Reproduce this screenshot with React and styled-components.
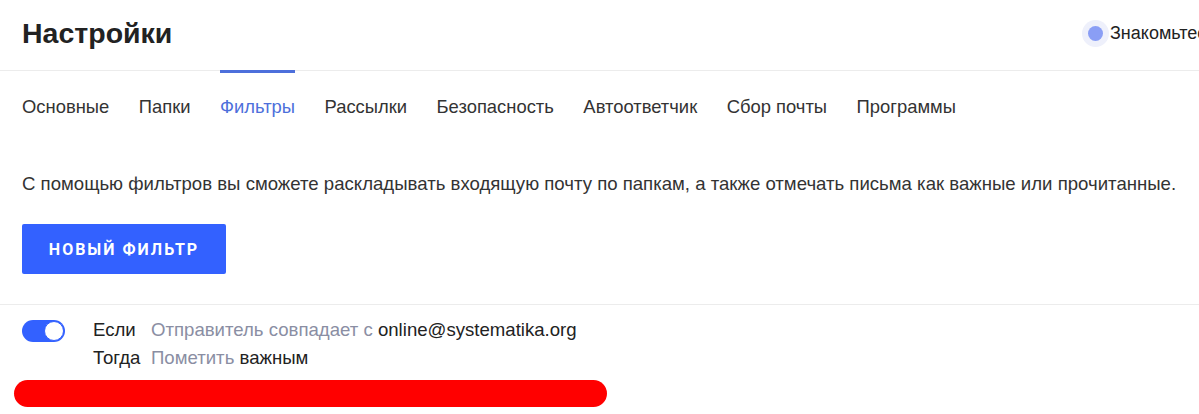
import React from "react";
import styled, { createGlobalStyle } from "styled-components";

const Global = createGlobalStyle`
  html, body { margin: 0; padding: 0; background: #fff; }
  body { font-family: "Liberation Sans", Arial, sans-serif; color: #333; overflow: hidden; }
`;

const Page = styled.div`
  width: 1199px;
  height: 414px;
  overflow: hidden;
  background: #fff;
`;

const Header = styled.header`
  height: 71px;
  display: flex;
  align-items: center;
  padding-left: 22px;
  border-bottom: 1px solid #ececec;
  box-sizing: border-box;
  overflow: hidden;
`;

const Title = styled.h1`
  margin: 0;
  font-size: 28.5px;
  font-weight: 700;
  color: #222;
  padding-bottom: 4px;
`;

const Intro = styled.div`
  margin-left: auto;
  width: 117px;
  flex: none;
  overflow: hidden;
  display: flex;
  align-items: center;
  gap: 1px;
  white-space: nowrap;
  padding-bottom: 4px;
  font-size: 18px;
  color: #222;
`;

const Halo = styled.span`
  flex: none;
  width: 27px;
  height: 27px;
  border-radius: 50%;
  background: #eef0fb;
  display: flex;
  align-items: center;
  justify-content: center;
`;

const Dot = styled.span`
  width: 15px;
  height: 15px;
  border-radius: 50%;
  background: #8a9ef5;
`;

const Tabs = styled.nav`
  display: flex;
  gap: 29.5px;
  padding-left: 22px;
  margin-top: -1px;
`;

const Tab = styled.a`
  display: block;
  padding: 24px 0 0;
  border-top: 3px solid ${(p) => (p.$active ? "#4d6fdb" : "transparent")};
  font-size: 18.4px;
  color: ${(p) => (p.$active ? "#4d6fdb" : "#333")};
  text-decoration: none;
  line-height: 20px;
`;

const Text = styled.p`
  margin: 57px 0 0 22px;
  font-size: 18.6px;
  line-height: 20px;
  color: #333;
  white-space: nowrap;
`;

const Button = styled.button`
  margin: 30px 0 0 22px;
  width: 204px;
  height: 50px;
  border: none;
  border-radius: 2px;
  background: #3361ff;
  color: #fff;
  font-family: Roboto, "Liberation Sans", sans-serif;
  font-weight: 700;
  font-size: 16px;
  letter-spacing: 2px;
  text-transform: uppercase;
  display: block;
  padding: 0;
`;

const Divider = styled.div`
  margin-top: 30px;
  height: 1px;
  background: #ececec;
`;

const Rule = styled.div`
  display: flex;
  align-items: flex-start;
  gap: 28px;
  padding: 15px 0 0 22px;
`;

const Toggle = styled.span`
  position: relative;
  flex: none;
  width: 43px;
  height: 22px;
  border-radius: 11px;
  background: #3361ff;
  &::after {
    content: "";
    position: absolute;
    right: 1px;
    top: 1px;
    width: 20px;
    height: 20px;
    border-radius: 50%;
    background: #fff;
    box-sizing: border-box;
    border: 1.5px solid #3361ff;
  }
`;

const Lines = styled.div`
  display: flex;
  flex-direction: column;
  gap: 8px;
  font-size: 18.6px;
  line-height: 20px;
`;

const Line = styled.div`
  display: flex;
  gap: 6px;
  white-space: nowrap;
`;

const Key = styled.span`
  color: #222;
  min-width: 52px;
`;

const Muted = styled.span`
  color: #8a8ea3;
`;

const Value = styled.span`
  color: #222;
`;

const Redact = styled.div`
  margin: 12px 0 0 14px;
  width: 593px;
  height: 27px;
  border-radius: 14px;
  background: #ff0000;
`;

const tabs = ["Основные", "Папки", "Фильтры", "Рассылки", "Безопасность", "Автоответчик", "Сбор почты", "Программы"];

export default function App() {
  return (
    <Page>
      <Global />
      <Header>
        <Title>Настройки</Title>
        <Intro>
          <Halo><Dot /></Halo>
          Знакомьтесь
        </Intro>
      </Header>
      <Tabs>
        {tabs.map((t) => (
          <Tab key={t} $active={t === "Фильтры"}>{t}</Tab>
        ))}
      </Tabs>
      <Text>
        С помощью фильтров вы сможете раскладывать входящую почту по папкам, а также отмечать письма как важные или прочитанные.
      </Text>
      <Button>Новый фильтр</Button>
      <Divider />
      <Rule>
        <Toggle />
        <Lines>
          <Line>
            <Key>Если</Key>
            <span><Muted>Отправитель совпадает с</Muted> <Value>online@systematika.org</Value></span>
          </Line>
          <Line>
            <Key>Тогда</Key>
            <span><Muted>Пометить</Muted> <Value>важным</Value></span>
          </Line>
        </Lines>
      </Rule>
      <Redact />
    </Page>
  );
}
